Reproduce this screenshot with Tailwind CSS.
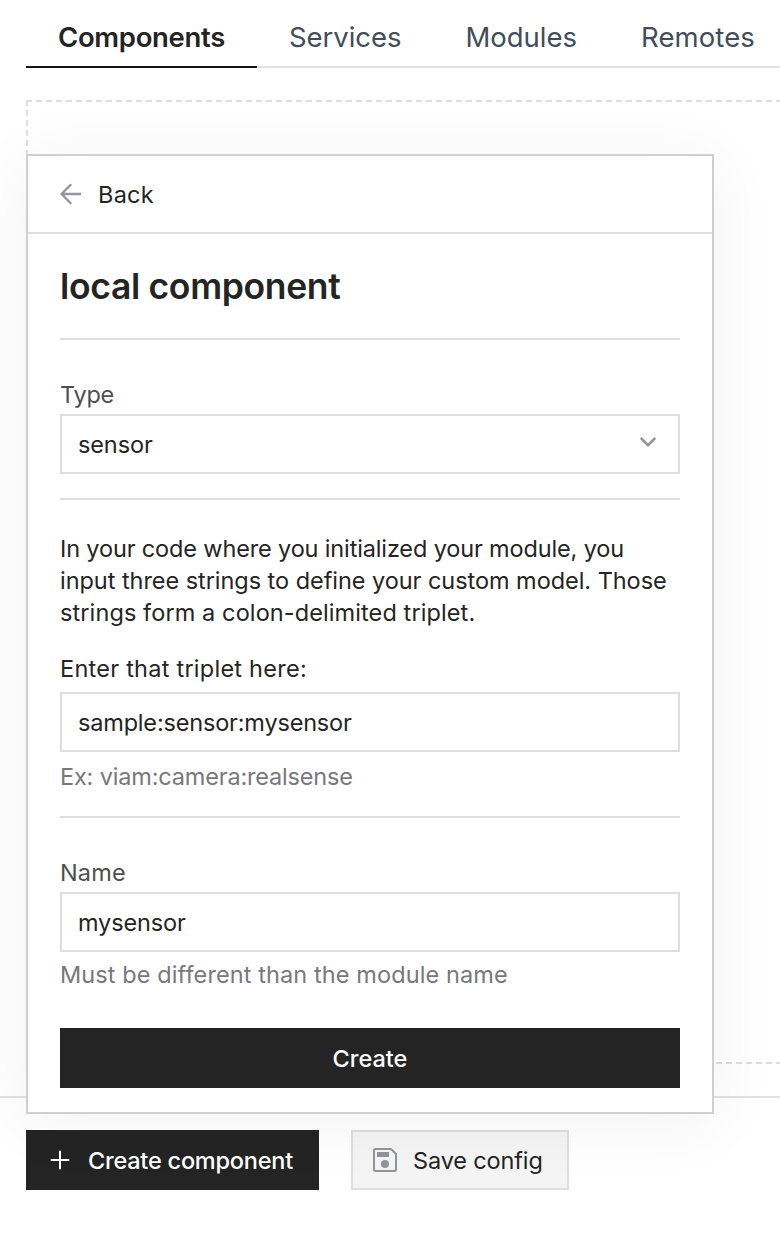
<!DOCTYPE html>
<html lang="en">
<head>
<meta charset="utf-8">
<title>Components</title>
<script src="https://cdn.jsdelivr.net/npm/@tailwindcss/browser@4"></script>
</head>
<body class="h-[1234px] w-[780px] overflow-hidden bg-white font-['Inter',sans-serif] text-[23.5px] leading-8 text-[#242424]">
<div class="relative h-[1234px] w-[780px] overflow-hidden">
  <nav class="ml-[26px] flex h-[68px] border-b-2 border-[#e1e1e8] text-[27.5px] whitespace-nowrap text-[#424c5a]">
    <div class="-mb-0.5 h-[68px] w-[231px] shrink-0 border-b-2 border-[#131414] pt-[21px] pl-8 font-semibold tracking-[-0.317px] text-[#242424]">Components</div>
    <div class="w-[176.5px] shrink-0 pt-[21px] pl-8 tracking-[-0.043px]">Services</div>
    <div class="w-[175.5px] shrink-0 pt-[21px] pl-8 tracking-[-0.02px]">Modules</div>
    <div class="w-[178px] shrink-0 pt-[21px] pl-8 tracking-[0.116px]">Remotes</div>
  </nav>
  <div class="mt-8 ml-[26px] h-[964px] w-[1396px] border-2 border-dashed border-[#dedede]"></div>
  <div class="mt-8 h-0.5 bg-[#e1e1e8]"></div>
  <div class="mt-8 ml-[26px] flex gap-8 whitespace-nowrap">
    <button class="flex h-[60px] w-[293px] items-center bg-[#242424] pl-6 font-medium text-white">
      <svg class="mr-[18px] h-5 w-5" viewBox="0 0 20 20" stroke="currentColor" stroke-width="2"><path d="M10 .7v18.6M.7 10h18.6"/></svg>
      <span class="pt-0.5 tracking-[-0.221px]">Create component</span>
    </button>
    <button class="flex h-[60px] w-[218px] items-center border-2 border-[#dedede] bg-[#f4f4f4] pl-5">
      <svg class="mr-4 h-6 w-6" viewBox="0 0 24 24" fill="none"><path d="M2.500 1H18L23 6v15.500a1.500 1.500 0 0 1-1.500 1.500h-19A1.500 1.500 0 0 1 1 21.500v-19A1.500 1.500 0 0 1 2.500 1Z" stroke="#93939b" stroke-width="2"/><path d="M4 4h12v5H4z" fill="#93939b"/><circle cx="12" cy="16" r="4" fill="#93939b"/></svg>
      <span class="pt-0.5 tracking-[-0.14px]">Save config</span>
    </button>
  </div>

  <section class="absolute top-[154px] left-[26px] h-[960px] w-[688px] border-2 border-[#cfcfcf] bg-white shadow-[0_8px_64px_rgba(0,0,0,0.06)]">
    <header class="flex h-[78px] items-center border-b-2 border-[#dedede] pl-8">
      <svg class="mr-4 h-[22px] w-[22px]" viewBox="0 0 22 22" fill="none" stroke="#93939b" stroke-width="2.300"><path d="M21 11H1.500M11.200 1.200 1.600 11l9.600 9.800"/></svg>
      <span class="pt-0.5 tracking-[0.273px]">Back</span>
    </header>
    <div class="flex flex-col px-8">
      <h2 class="flex h-[106px] items-center border-b-2 border-[#dedede] pt-0.5 text-[35.5px] font-semibold tracking-[-0.34px]">local component</h2>
      <div class="mt-[39px] tracking-[-0.25px] text-[#4e4f52]">Type</div>
      <div class="mt-[3px] flex h-[60px] items-center justify-between border-2 border-[#dedede] pr-[22px] pl-4">
        <span class="pt-0.5 tracking-[-0.12px]">sensor</span>
        <svg class="-mt-1 h-4 w-4" viewBox="0 0 16 16" fill="none" stroke="#93939b" stroke-width="2.500"><path d="m.8 4 7.200 7.200L15.200 4"/></svg>
      </div>
      <div class="mt-6 h-0.5 bg-[#dedede]"></div>
      <p class="mt-[33px] whitespace-nowrap"><span class="tracking-[-0.145px]">In your code where you initialized your module, you</span><br><span class="tracking-[-0.045px]">input three strings to define your custom model. Those</span><br><span class="tracking-[0.1px]">strings form a colon-delimited triplet.</span></p>
      <div class="mt-6 tracking-[0.25px]">Enter that triplet here:</div>
      <div class="mt-[7px] flex h-[60px] items-center border-2 border-[#dedede] pt-0.5 pl-4 tracking-[-0.18px]">sample:sensor:mysensor</div>
      <div class="mt-[9px] tracking-[-0.17px] text-[#77787d]">Ex: viam:camera:realsense</div>
      <div class="mt-[23px] h-0.5 bg-[#dedede]"></div>
      <div class="mt-[39px] tracking-[0.15px] text-[#4e4f52]">Name</div>
      <div class="mt-[3px] flex h-[60px] items-center border-2 border-[#dedede] pt-0.5 pl-4 tracking-[-0.12px]">mysensor</div>
      <div class="mt-[7px] tracking-[0.1px] text-[#77787d]">Must be different than the module name</div>
      <button class="mt-[37px] h-[60px] bg-[#242424] pt-0.5 font-medium text-white">Create</button>
    </div>
  </section>
</div>
</body>
</html>
